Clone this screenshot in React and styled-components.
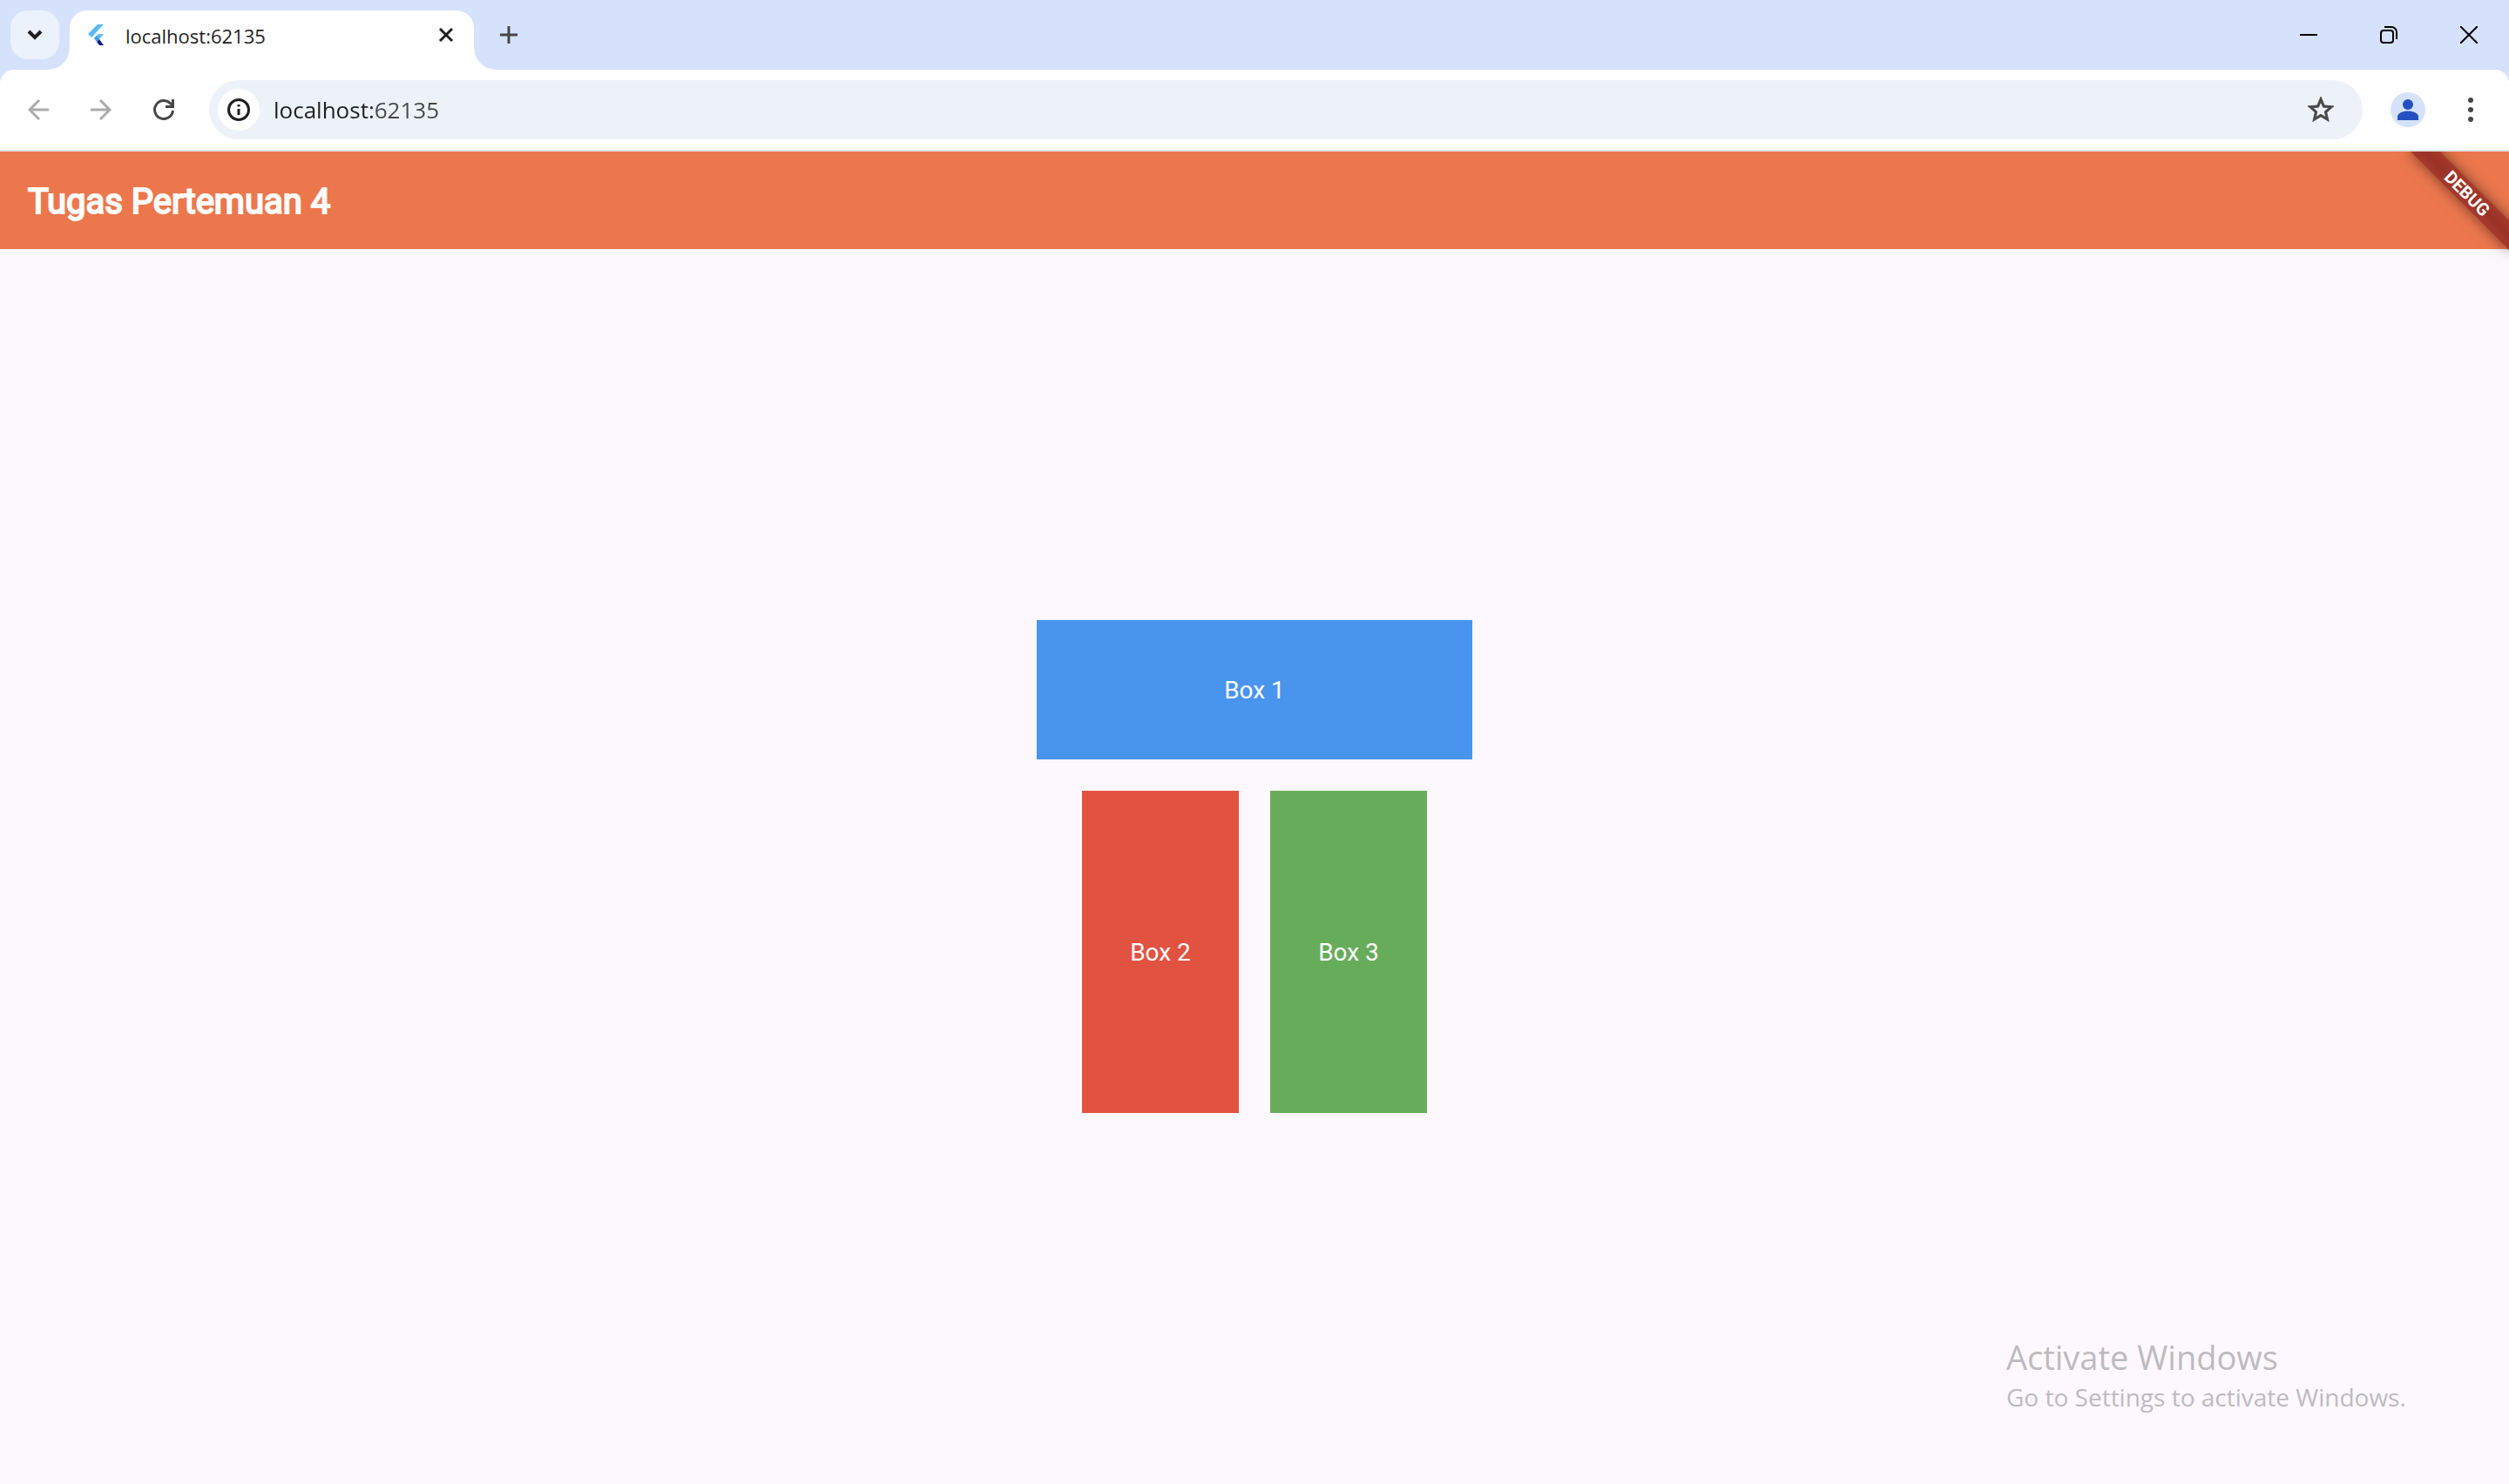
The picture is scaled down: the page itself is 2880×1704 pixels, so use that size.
import React from "react";
import styled, { createGlobalStyle } from "styled-components";

const GlobalStyle = createGlobalStyle`
  *, *::before, *::after { box-sizing: border-box; }
  body { margin: 0; font-family: "Open Sans", "Noto Sans", sans-serif; background: #fcf8fe; }
  button, input { font: inherit; }
  svg { display: block; }
`;

const Window = styled.div`
  display: flex;
  flex-direction: column;
  min-height: 100vh;
  background: #d6e2fb;
`;

const IconButton = styled.button`
  display: flex;
  align-items: center;
  justify-content: center;
  flex: none;
  width: ${(p) => p.$width || 56}px;
  height: ${(p) => p.$height || 56}px;
  padding: 0;
  border: 0;
  border-radius: ${(p) => p.$radius || 0}px;
  background: ${(p) => p.$fill || "transparent"};
  color: ${(p) => p.$color || "#474747"};
`;

const TabStrip = styled.header`
  display: flex;
  align-items: center;
  height: 80px;
  padding-left: 12px;
`;

const Tab = styled.div`
  position: relative;
  display: flex;
  align-items: center;
  align-self: flex-end;
  width: 464px;
  height: 68px;
  margin-left: 12px;
  padding: 0 4px 12px 20px;
  border-radius: 20px 20px 0 0;
  background: #fff;

  &::before,
  &::after {
    content: "";
    position: absolute;
    bottom: 0;
    width: 24px;
    height: 24px;
  }
  &::before {
    right: 100%;
    background: radial-gradient(circle at 0 0, transparent 23px, #fff 24px);
  }
  &::after {
    left: 100%;
    background: radial-gradient(circle at 100% 0, transparent 23px, #fff 24px);
  }
`;

const TabTitle = styled.span`
  flex: 1;
  margin-left: 24px;
  padding-top: 2px;
  font-size: 22px;
  line-height: 32px;
  color: #1f1f1f;
`;

const NewTab = styled.div`
  margin-left: 12px;
`;

const Caption = styled.div`
  display: flex;
  margin-left: auto;
`;

const Toolbar = styled.nav`
  display: flex;
  align-items: center;
  gap: 16px;
  height: 94px;
  padding: 0 16px;
  border-bottom: 2px solid #e0e2e0;
  border-radius: 16px 16px 0 0;
  background: #fff;
`;

const AddressBar = styled.div`
  display: flex;
  align-items: center;
  flex: 1;
  height: 68px;
  margin: 0 8px;
  padding: 0 20px 0 10px;
  border-radius: 34px;
  background: #edf2f9;
`;

const AddressInput = styled.input`
  flex: 1;
  min-width: 0;
  height: 40px;
  margin-left: 16px;
  padding: 0;
  border: 0;
  outline: 0;
  font-size: 26px;
  line-height: 40px;
  background: linear-gradient(to right, #1f1f1f 117px, #474747 117px);
  background-clip: text;
  -webkit-text-fill-color: transparent;
`;

const Page = styled.div`
  position: relative;
  display: flex;
  flex-direction: column;
  flex: 1;
  overflow: hidden;
  background: #fcf8fe;
`;

const AppBar = styled.div`
  display: flex;
  align-items: center;
  height: 112px;
  padding: 4px 32px 0;
  background: #ec774d;
`;

const AppTitle = styled.h1`
  margin: 0;
  font-family: Roboto, sans-serif;
  font-size: 40px;
  font-weight: 400;
  line-height: 56px;
  color: #fff;
  -webkit-text-stroke: 2px #fff;
`;

const DebugBanner = styled.div`
  position: absolute;
  top: 56px;
  right: -80px;
  width: 160px;
  height: 24px;
  transform: rotate(45deg);
  transform-origin: 50% -56px;
  background: linear-gradient(#a6392c, #983226 50%, #a6392c);
  box-shadow: 0 0 16px rgba(0, 0, 0, 0.5);
  font-family: Roboto, sans-serif;
  font-size: 20px;
  font-weight: 700;
  line-height: 24px;
  text-align: center;
  color: #fff;
`;

const Body = styled.main`
  display: flex;
  flex-direction: column;
  align-items: center;
  justify-content: center;
  gap: 36px;
  flex: 1;
`;

const BoxRow = styled.div`
  display: flex;
  gap: 36px;
`;

const Box = styled.div`
  display: flex;
  align-items: center;
  justify-content: center;
  width: ${(p) => p.$width}px;
  height: ${(p) => p.$height}px;
  padding-top: 2px;
  background: ${(p) => p.$color};
  font-family: Roboto, sans-serif;
  font-size: 28px;
  line-height: 40px;
  color: #fff;
`;

const Watermark = styled.aside`
  position: absolute;
  left: calc(100% - 577px);
  bottom: 80px;
  white-space: nowrap;
  color: #bdbbbf;
`;

const WatermarkTitle = styled.p`
  margin: 0;
  font-size: 38px;
  line-height: 52px;
`;

const WatermarkText = styled.p`
  margin: 0;
  font-size: 28px;
  line-height: 40px;
`;

const Line = ({ w = 24, h = w, sw = 3, children, ...rest }) => (
  <svg width={w} height={h} viewBox={`0 0 ${w} ${h}`} fill="none" stroke="currentColor" strokeWidth={sw} aria-hidden="true" {...rest}>
    {children}
  </svg>
);

const FlutterLogo = () => (
  <svg width="20" height="24" viewBox="0 0 20 24" aria-hidden="true">
    <path d="M12 0h7L5 15l-4-4z" fill="#5cb8f5" />
    <path d="M13 11h6l-6 7-5-2z" fill="#5cb8f5" />
    <path d="M8 16l3-3 3 3-3 4z" fill="#3fa0e6" />
    <path d="M11 20l3-3 5 7h-5z" fill="#0b1f8c" />
  </svg>
);

export default function App() {
  return (
    <Window>
      <GlobalStyle />
      <TabStrip>
        <IconButton aria-label="Search tabs" $fill="#ebf2fc" $radius={20} $color="#1f1f1f">
          <Line w={18} h={12} sw={4}><path d="M2 2l7 7 7-7" /></Line>
        </IconButton>
        <Tab>
          <FlutterLogo />
          <TabTitle>localhost:62135</TabTitle>
          <IconButton aria-label="Close tab" $color="#1f1f1f">
            <Line w={18}><path d="M2 2l14 14M16 2L2 16" /></Line>
          </IconButton>
        </Tab>
        <NewTab>
          <IconButton aria-label="New tab">
            <Line w={20}><path d="M10 0v20M0 10h20" /></Line>
          </IconButton>
        </NewTab>
        <Caption>
          <IconButton aria-label="Minimize" $width={92} $height={80} $color="#000">
            <Line w={20} sw={2}><path d="M0 10h20" /></Line>
          </IconButton>
          <IconButton aria-label="Restore" $width={92} $height={80} $color="#000">
            <Line w={20} sw={2}>
              <rect x="1" y="5" width="14" height="14" rx="3" />
              <path d="M5 1h8a6 6 0 0 1 6 6v8" />
            </Line>
          </IconButton>
          <IconButton aria-label="Close" $width={92} $height={80} $color="#000">
            <Line w={20} sw={2}><path d="M0 0l20 20M20 0L0 20" /></Line>
          </IconButton>
        </Caption>
      </TabStrip>
      <Toolbar>
        <IconButton aria-label="Back" $color="#ababab">
          <Line><path d="M13 1L2 12l11 11M2 12h22" /></Line>
        </IconButton>
        <IconButton aria-label="Forward" $color="#ababab">
          <Line><path d="M11 1l11 11-11 11M22 12H0" /></Line>
        </IconButton>
        <IconButton aria-label="Reload">
          <Line><path d="M22.500 13A10.500 10.500 0 1 1 19.500 4.600L22 7M22.500 0v8.500H14" /></Line>
        </IconButton>
        <AddressBar>
          <IconButton aria-label="Site information" $width={48} $height={48} $radius={24} $fill="#fff" $color="#1f1f1f">
            <Line w={26}>
              <circle cx="13" cy="13" r="11.500" />
              <path d="M13 12v7M13 7v2.500" />
            </Line>
          </IconButton>
          <AddressInput aria-label="Address" defaultValue="localhost:62135" />
          <IconButton aria-label="Bookmark this tab">
            <svg width="36" height="36" viewBox="0 0 24 24" fill="currentColor" stroke="currentColor" strokeWidth="0.5" aria-hidden="true">
              <path d="M22 9.240l-7.190-.62L12 2 9.190 8.630 2 9.240l5.460 4.730L5.820 21 12 17.270 18.180 21l-1.630-7.030zM12 15.400l-3.760 2.270 1-4.280-3.320-2.880 4.380-.38L12 6.100l1.710 4.040 4.380.38-3.320 2.880 1 4.280z" />
            </svg>
          </IconButton>
        </AddressBar>
        <IconButton aria-label="Profile">
          <svg width="40" height="40" viewBox="0 0 40 40" aria-hidden="true">
            <circle cx="20" cy="20" r="20" fill="#d6e2fb" />
            <circle cx="20" cy="14" r="6" fill="#2450c1" />
            <path d="M8 32v-4c0-4 6-6.500 12-6.500s12 2.500 12 6.500v4z" fill="#2450c1" />
          </svg>
        </IconButton>
        <IconButton aria-label="Menu">
          <svg width="6" height="28" viewBox="0 0 6 28" fill="currentColor" aria-hidden="true">
            <circle cx="3" cy="3" r="3" />
            <circle cx="3" cy="14" r="3" />
            <circle cx="3" cy="25" r="3" />
          </svg>
        </IconButton>
      </Toolbar>
      <Page>
        <AppBar>
          <AppTitle>Tugas Pertemuan 4</AppTitle>
        </AppBar>
        <Body>
          <Box $width={500} $height={160} $color="#4994ec">Box 1</Box>
          <BoxRow>
            <Box $width={180} $height={370} $color="#e15241">Box 2</Box>
            <Box $width={180} $height={370} $color="#67ac5b">Box 3</Box>
          </BoxRow>
        </Body>
        <DebugBanner>DEBUG</DebugBanner>
        <Watermark>
          <WatermarkTitle>Activate Windows</WatermarkTitle>
          <WatermarkText>Go to Settings to activate Windows.</WatermarkText>
        </Watermark>
      </Page>
    </Window>
  );
}
